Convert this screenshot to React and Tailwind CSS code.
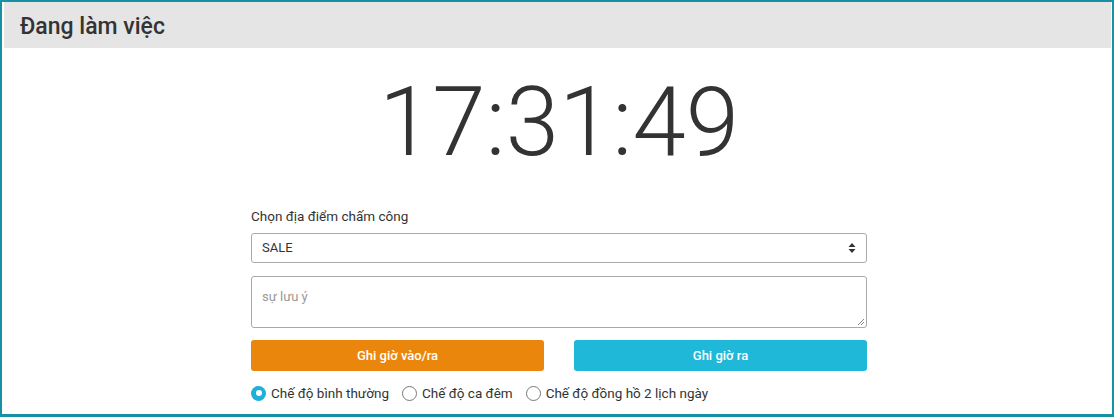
export default function App() {
  const font = { fontFamily: "Roboto, 'Noto Sans', sans-serif" };
  return (
    <div className="w-[1114px] h-[417px] bg-white border-2 border-b-[3px] border-[#1591a3] flex flex-col" style={font}>
      <div className="h-[46px] ml-[2px] mr-px bg-[#e5e5e5] flex items-center pl-[16px] pt-[2px]">
        <h1 className="text-[23px] font-medium text-[#333] leading-none">Đang làm việc</h1>
      </div>
      <div className="flex justify-center mt-[24px] pl-[4px]">
        <div className="text-[96px] font-light text-[#333] leading-none h-[100px] flex items-center">17:31:49</div>
      </div>
      <div className="w-[616px] ml-[249px] mt-[36px] flex flex-col">
        <label className="text-[13.5px] text-[#333] leading-[16px]">Chọn địa điểm chấm công</label>
        <div className="mt-[9px] h-[30px] border border-[#aaa] rounded-[3px] flex items-center justify-between pl-[10px] pr-[10px]">
          <span className="text-[13px] text-[#333]">SALE</span>
          <svg width="8" height="12" viewBox="0 0 8 12">
            <path d="M4 1 L7.5 5 H0.5 Z" fill="#333" />
            <path d="M4 11 L7.5 7 H0.5 Z" fill="#333" />
          </svg>
        </div>
        <div className="mt-[13px] h-[52px] border border-[#aaa] rounded-[3px] relative pl-[10px] pt-[7px]">
          <span className="text-[13px] text-[#999]">sự lưu ý</span>
          <svg className="absolute right-[1px] bottom-[1px]" width="8" height="8" viewBox="0 0 8 8">
            <path d="M7 1 L1 7 M7 4 L4 7" stroke="#888" strokeWidth="1" />
          </svg>
        </div>
        <div className="mt-[12px] flex justify-between">
          <button className="w-[293px] h-[31px] rounded-[3px] bg-[#eb860d] text-white text-[13px] font-medium">Ghi giờ vào/ra</button>
          <button className="w-[293px] h-[31px] rounded-[3px] bg-[#1fb8d8] text-white text-[13px] font-medium">Ghi giờ ra</button>
        </div>
        <div className="mt-[14px] flex items-center text-[13.5px] text-[#333] leading-[16px]">
          <span className="w-[15px] h-[15px] rounded-full bg-[#1fb0d8] flex items-center justify-center">
            <span className="w-[6px] h-[6px] rounded-full bg-white"></span>
          </span>
          <span className="ml-[5px]">Chế độ bình thường</span>
          <span className="ml-[13px] w-[15px] h-[15px] rounded-full border border-[#777]"></span>
          <span className="ml-[5px]">Chế độ ca đêm</span>
          <span className="ml-[13px] w-[15px] h-[15px] rounded-full border border-[#777]"></span>
          <span className="ml-[5px]">Chế độ đồng hồ 2 lịch ngày</span>
        </div>
      </div>
    </div>
  );
}
